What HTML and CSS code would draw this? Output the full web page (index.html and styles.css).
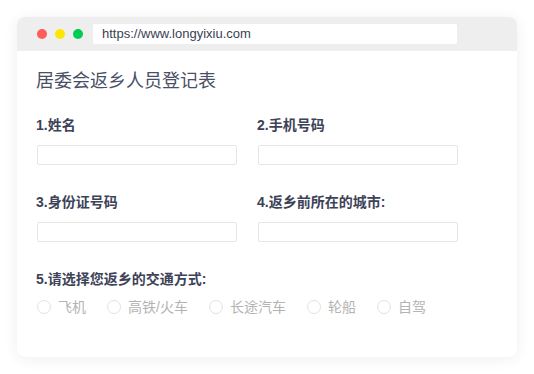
FILE: index.html
```html
<!DOCTYPE html>
<html lang="zh-CN">
<head>
  <meta charset="UTF-8"/>
  <meta name="viewport" content="width=device-width, initial-scale=1.0"/>
  <title>居委会返乡人员登记表</title>
  <link rel="stylesheet" href="styles.css">
</head>
<body>
  <div class="window">
    <div class="titlebar">
      <span class="dot red"></span>
      <span class="dot yellow"></span>
      <span class="dot green"></span>
      <div class="url">https://www.longyixiu.com</div>
    </div>
    <div class="content">
      <h1>居委会返乡人员登记表</h1>
      <div class="fields">
        <div class="field">
          <label>1.姓名</label>
          <input type="text">
        </div>
        <div class="field">
          <label>2.手机号码</label>
          <input type="text">
        </div>
        <div class="field">
          <label>3.身份证号码</label>
          <input type="text">
        </div>
        <div class="field">
          <label>4.返乡前所在的城市:</label>
          <input type="text">
        </div>
      </div>
      <div class="question">
        <label>5.请选择您返乡的交通方式:</label>
        <div class="options">
          <span class="option"><i class="radio"></i>飞机</span>
          <span class="option"><i class="radio"></i>高铁/火车</span>
          <span class="option"><i class="radio"></i>长途汽车</span>
          <span class="option"><i class="radio"></i>轮船</span>
          <span class="option"><i class="radio"></i>自驾</span>
        </div>
      </div>
    </div>
  </div>
</body>
</html>
```

FILE: styles.css
```css
* {
  box-sizing: border-box;
  margin: 0;
  padding: 0;
}

body {
  font-family: 'Liberation Sans', 'Noto Sans CJK SC', sans-serif;
  background: #fff;
  padding: 17px;
  color: #3d4257;
}

.window {
  width: 500px;
  height: 340px;
  background: #fff;
  border-radius: 8px;
  overflow: hidden;
  box-shadow: 0 2px 14px rgba(40, 50, 90, 0.08);
}

.titlebar {
  height: 34px;
  background: #eeeeee;
  display: flex;
  align-items: center;
  padding-left: 20px;
}

.dot {
  width: 10px;
  height: 10px;
  border-radius: 50%;
  margin-right: 8px;
}

.red { background: #ff5b5b; }
.yellow { background: #ffe600; }
.green { background: #00cc55; }

.url {
  margin-left: 2px;
  width: 364px;
  height: 20px;
  background: #fff;
  border-radius: 2px;
  padding-left: 9px;
  font-size: 13px;
  line-height: 20px;
  color: #3a3f52;
}

.content {
  padding: 18px 19px 0;
}

h1 {
  font-size: 18px;
  font-weight: normal;
  line-height: 24px;
  color: #4a4f66;
  margin-bottom: 22px;
}

.fields {
  display: grid;
  grid-template-columns: 221px 221px;
  row-gap: 27px;
}

label {
  display: block;
  font-size: 14px;
  font-weight: bold;
  line-height: 20px;
  margin-bottom: 10px;
}

input {
  display: block;
  width: 200px;
  height: 20px;
  margin-left: 1px;
  border: 1px solid #e6e6e6;
  border-radius: 2px;
  background: #fff;
  outline: none;
}

.question {
  margin-top: 27px;
}

.question label {
  margin-bottom: 8px;
}

.options {
  display: flex;
  gap: 20px;
  font-size: 14px;
  line-height: 20px;
  color: #b3b3b3;
}

.option {
  display: flex;
  align-items: center;
}

.radio {
  width: 14px;
  height: 14px;
  margin-left: 1px;
  margin-right: 7px;
  border: 1px solid #e3e3e3;
  border-radius: 50%;
}
```
